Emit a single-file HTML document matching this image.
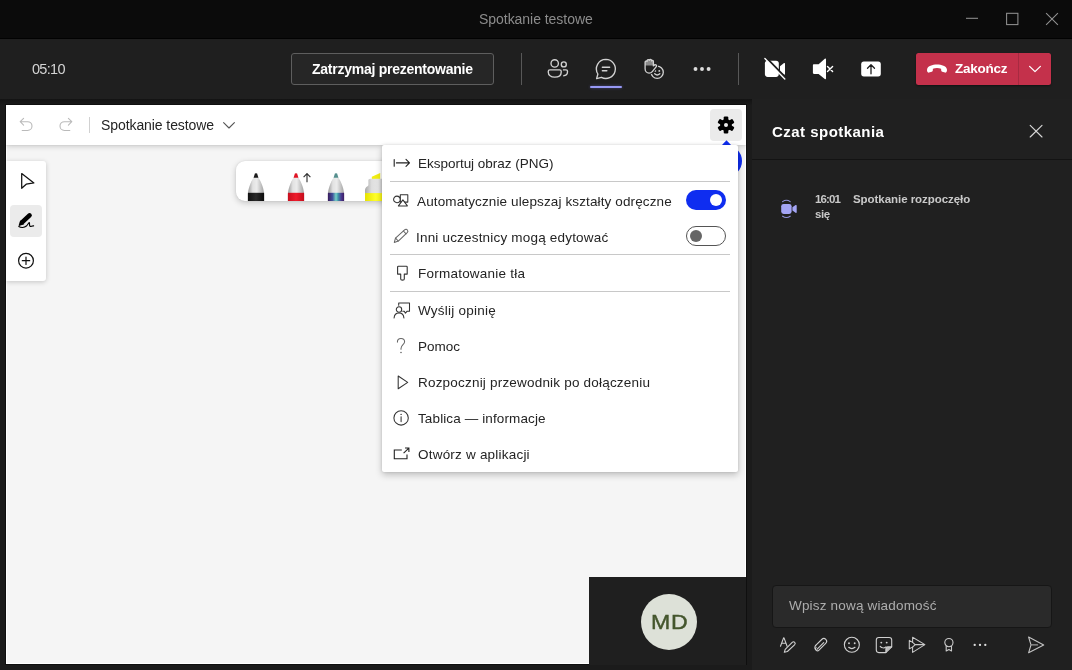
<!DOCTYPE html>
<html><head><meta charset="utf-8">
<style>
*{box-sizing:border-box;margin:0;padding:0}
html,body{width:1072px;height:670px;overflow:hidden;background:#1b1b1b;font-family:"Liberation Sans",sans-serif;}
.abs{position:absolute}
svg{position:absolute;overflow:visible}
.t{position:absolute;white-space:nowrap;line-height:1;will-change:transform}
#titlebar{left:0;top:0;width:1072px;height:39px;background:#0b0b0b}
#toolbar{left:0;top:39px;width:1072px;height:60px;background:#1f1f1f}
#stopbtn{left:291px;top:53px;width:203px;height:32px;border:1px solid #5e5e5e;border-radius:3px;background:#262626}
.vsep{width:1px;background:#585858;top:53px;height:32px}
#endbtn{left:916px;top:53px;width:135px;height:32px;border-radius:2.500px;background:#c4314b;box-shadow:0 1px 2px rgba(0,0,0,.4)}
#enddiv{left:1018px;top:53px;width:1px;height:32px;background:#a72a41}
#stage{left:0;top:99px;width:752px;height:571px;background:#1b1b1b}
#wb{left:6px;top:105px;width:740px;height:559px;background:#f5f5f5;overflow:hidden;outline:1px solid #0f0f0f}
#panel{left:752px;top:99px;width:320px;height:571px;background:#202020}
</style></head><body>
<!-- TITLE BAR -->
<div id="titlebar" class="abs"></div><div class="abs" style="left:0;top:38px;width:1072px;height:1px;background:#020202"></div>
<div class="t" style="left:479px;top:12px;font-size:14px;color:#8c8c8c;letter-spacing:-0.040px">Spotkanie testowe</div>
<svg style="left:960px;top:8px" width="104" height="24" viewBox="0 0 104 24" fill="none" stroke="#919191" stroke-width="1.050">
  <path d="M6 10.300H18"/>
  <rect x="46.600" y="5.300" width="11.300" height="11.300"/>
  <path d="M86.100 5.100L97.900 16.900M97.900 5.100L86.100 16.900"/>
</svg>
<!-- TOOLBAR -->
<div id="toolbar" class="abs"></div>
<div class="t" style="left:31.500px;top:61.900px;font-size:14.500px;color:#d4d4d4;letter-spacing:-0.700px">05:10</div>
<div id="stopbtn" class="abs"></div>
<div class="t" style="left:312px;top:62px;font-size:14px;font-weight:bold;color:#fff;letter-spacing:-0.25px">Zatrzymaj prezentowanie</div>
<div class="abs vsep" style="left:521px"></div>
<div class="abs vsep" style="left:738px"></div>

<!-- people -->
<svg style="left:546px;top:57px" width="24" height="24" viewBox="0 0 24 24" fill="none" stroke="#d2d2d2" stroke-width="1.35">
  <circle cx="8.7" cy="6.4" r="3.7"/>
  <circle cx="17.8" cy="7.4" r="2.5"/>
  <path d="M3.9 12.8H13.6C14.7 12.8 15.2 13.4 15.2 14.3V15.2C15.2 18.1 12.6 20.1 8.7 20.1C4.8 20.1 2.3 18.1 2.3 15.2V14.3C2.3 13.4 2.9 12.8 3.9 12.8Z"/>
  <path d="M16.9 12.8H20C20.9 12.8 21.5 13.4 21.5 14.3V14.8C21.5 17.2 19.8 18.7 17.2 18.9"/>
</svg>
<!-- chat -->
<svg style="left:594px;top:57px" width="24" height="24" viewBox="0 0 24 24" fill="none" stroke="#d2d2d2" stroke-width="1.35" stroke-linejoin="round" stroke-linecap="round">
  <path d="M11.9 2.4A9.5 9.5 0 1 1 7.4 20.3L2.6 21.6L3.9 17A9.5 9.5 0 0 1 11.9 2.4Z"/>
  <path d="M8.4 10.2H15.6M8.4 13.8H12.8" stroke-width="1.5"/>
</svg>
<div class="abs" style="left:590px;top:85.6px;width:32px;height:2.6px;border-radius:1.3px;background:#9799f5;box-shadow:0 0 3px rgba(130,130,255,.45)"></div>
<!-- reactions -->
<svg style="left:642px;top:57px" width="24" height="24" viewBox="0 0 24 24" fill="none" stroke="#d2d2d2" stroke-width="1.3" stroke-linejoin="round" stroke-linecap="round">
  <circle cx="15.2" cy="15.3" r="6.1"/>
  <path d="M12.7 16.8Q15.2 19 17.800 16.800" stroke-width="1.4"/>
  <circle cx="13.300" cy="13.900" r=".95" fill="#d2d2d2" stroke="none"/><circle cx="17.300" cy="13.900" r=".95" fill="#d2d2d2" stroke="none"/>
  <path id="hand" d="M3.100 5.200C3.100 4 4.600 3.700 5.100 4.500V3.600C5.300 2.400 6.900 2.300 7.300 3.300C7.600 2 9.400 2.100 9.600 3.300V3.900C10 3 11.400 3.300 11.400 4.500V8.900C12.200 8 13.400 7.500 14.200 8.100C14.800 8.600 14.600 9.300 14.100 9.900L10.300 14.600C9.400 15.700 8.300 16.100 7.100 16.100C4.800 16.100 3.100 14.200 3.100 11.700Z" fill="#1f1f1f" stroke="#1f1f1f" stroke-width="3.200"/>
  <path d="M3.600 4.300C4.100 3.500 5 3.700 5.100 4.300V3.400C5.500 2.300 6.900 2.300 7.300 3.300C7.700 2.100 9.300 2.200 9.600 3.300V3.900C10.100 3.100 11.300 3.400 11.400 4.500V8.600H3.100V5.200Z" fill="#8a8a8a" stroke="none"/>
  <path d="M3.100 5.200C3.100 4 4.600 3.700 5.100 4.500V3.600C5.300 2.400 6.900 2.300 7.300 3.300C7.600 2 9.400 2.100 9.600 3.300V3.900C10 3 11.400 3.300 11.400 4.500V8.900C12.200 8 13.400 7.500 14.200 8.100C14.800 8.600 14.600 9.300 14.100 9.900L10.300 14.600C9.400 15.700 8.300 16.100 7.100 16.100C4.800 16.100 3.100 14.200 3.100 11.700Z"/>
</svg>
<!-- dots -->
<svg style="left:690px;top:57px" width="24" height="24" viewBox="0 0 24 24" fill="#dcdcdc"><circle cx="5.5" cy="12.05" r="1.95"/><circle cx="12" cy="12.05" r="1.95"/><circle cx="18.6" cy="12.05" r="1.95"/></svg>
<!-- camera off -->
<svg style="left:763px;top:57px" width="24" height="24" viewBox="0 0 24 24">
  <rect x="1.9" y="3.7" width="13.9" height="16.2" rx="2.8" fill="#fff"/>
  <path d="M17 9.2L21 6.1C21.5 5.7 22 6 22 6.6V17C22 17.6 21.5 17.9 21 17.5L17 14.6Z" fill="#fff"/>
  <path d="M2.900 0.600L23.100 21.300" stroke="#1f1f1f" stroke-width="2.200"/>
  <path d="M1.9 1.6L21.8 22" stroke="#fff" stroke-width="1.4" stroke-linecap="round"/>
</svg>
<!-- speaker muted -->
<svg style="left:811px;top:57px" width="24" height="24" viewBox="0 0 24 24" fill="#fff">
  <path d="M3 7.3H7.6L13.8 1.7C14.3 1.2 15 1.5 15 2.2V21.4C15 22.1 14.3 22.4 13.8 21.9L7.6 16.9H3C2.3 16.9 1.9 16.4 1.9 15.8V8.4C1.9 7.8 2.3 7.3 3 7.3Z"/>
  <path d="M16.5 9.4L21.6 14.6M21.6 9.4L16.5 14.6" stroke="#fff" stroke-width="1.4" stroke-linecap="round"/>
</svg>
<!-- share -->
<svg style="left:859px;top:57px" width="24" height="24" viewBox="0 0 24 24">
  <rect x="2.2" y="4.6" width="19.6" height="14.8" rx="2.6" fill="#fff"/>
  <path d="M12 16.800V8M8.500 11.300L12 7.800L15.500 11.300" stroke="#1f1f1f" stroke-width="1.300" fill="none" stroke-linecap="round" stroke-linejoin="round"/>
</svg>

<div id="endbtn" class="abs"></div><div id="enddiv" class="abs"></div>

<svg style="left:925px;top:59px" width="24" height="20" viewBox="0 0 24 20" fill="#fff">
  <path d="M12 5.6C16.6 5.6 21.2 7.1 21.9 10.3C22.1 11.3 22 12.300 21.4 13.1C21.100 13.6 20.6 13.800 20 13.600L17.200 12.700C16.600 12.500 16.200 12 16.200 11.400L16.100 9.700C14.900 9.200 13.400 9 12 9C10.600 9 9.100 9.200 7.900 9.700L7.800 11.400C7.800 12 7.400 12.500 6.800 12.700L4 13.600C3.400 13.800 2.900 13.600 2.600 13.100C2 12.300 1.900 11.300 2.100 10.300C2.800 7.100 7.400 5.600 12 5.600Z"/>
</svg>
<svg style="left:1027px;top:61px" width="16" height="16" viewBox="0 0 16 16" fill="none" stroke="#fff" stroke-width="1.3" stroke-linecap="round" stroke-linejoin="round"><path d="M2.600 5.400L8 10.600L13.400 5.400"/></svg>
<div class="t" style="left:954.5px;top:62px;font-size:13.5px;font-weight:bold;color:#fff;letter-spacing:-0.25px">Zakończ</div>
<!-- STAGE -->
<div id="stage" class="abs"></div><div class="abs" style="left:0;top:99px;width:752px;height:6px;background:linear-gradient(#131313,#1a1a1a)"></div>
<div id="wb" class="abs">
<div class="abs" style="left:0;top:0;width:740px;height:559px;border:1px solid #fff"></div>

<!-- pen toolbar (coords relative to wb: subtract 6,105) -->
<div class="abs" style="left:230px;top:55.800px;width:280px;height:40.200px;background:#fff;border-radius:9px;box-shadow:0 2px 6px rgba(0,0,0,.2),0 0 2px rgba(0,0,0,.1);overflow:hidden">
<svg style="left:0;top:-0.400px" width="280" height="41" viewBox="0 0 280 41">
  <defs>
    <linearGradient id="gb" x1="0" x2="1" y1="0" y2="0"><stop offset="0" stop-color="#9a9a9a"/><stop offset=".3" stop-color="#e2e2e2"/><stop offset=".55" stop-color="#ececec"/><stop offset="1" stop-color="#a2a2a2"/></linearGradient>
    <linearGradient id="gal" x1="0" x2="1" y1="0" y2="0"><stop offset="0" stop-color="#3a1b5c"/><stop offset=".28" stop-color="#3f4f9a"/><stop offset=".5" stop-color="#74d2c6"/><stop offset=".64" stop-color="#3d8fa8"/><stop offset=".82" stop-color="#4a3a90"/><stop offset="1" stop-color="#3c1d62"/></linearGradient>
    <linearGradient id="blk" x1="0" x2="1" y1="0" y2="0"><stop offset="0" stop-color="#111"/><stop offset=".5" stop-color="#2a2a2a"/><stop offset="1" stop-color="#0c0c0c"/></linearGradient>
    <linearGradient id="red" x1="0" x2="1" y1="0" y2="0"><stop offset="0" stop-color="#c80f1e"/><stop offset=".5" stop-color="#ee1c2c"/><stop offset="1" stop-color="#c40d1c"/></linearGradient>
  <linearGradient id="yel" x1="0" x2="1" y1="0" y2="0"><stop offset="0" stop-color="#e6e200"/><stop offset=".45" stop-color="#ffff2a"/><stop offset="1" stop-color="#efeb00"/></linearGradient>
    <linearGradient id="gb2" x1="0" x2="1" y1="0" y2="0"><stop offset="0" stop-color="#a8a8a8"/><stop offset=".35" stop-color="#dedede"/><stop offset=".7" stop-color="#e6e6e6"/><stop offset="1" stop-color="#c4c4c4"/></linearGradient>
  </defs>
  <!-- black pen, center x=20 -->
  <g transform="translate(20,0)">
    <path d="M-8.100 41V34.500C-8 29.300 -5.500 22 -2.200 17.500H2.200C5.500 22 8 29.300 8.100 34.500V41Z" fill="url(#gb)"/>
    <path d="M-2.400 17.700L-1.100 13.600Q0 12.700 1.100 13.600L2.400 17.700Z" fill="#1b1b1b"/>
    <rect x="-8.100" y="32.800" width="16.200" height="9" fill="url(#blk)"/>
  </g>
  <!-- red pen, center x=60 -->
  <g transform="translate(60,0)">
    <path d="M-8.100 41V34.500C-8 29.300 -5.500 22 -2.200 17.500H2.200C5.500 22 8 29.300 8.100 34.500V41Z" fill="url(#gb)"/>
    <path d="M-2.400 17.700L-1.100 13.600Q0 12.700 1.100 13.600L2.400 17.700Z" fill="#e01525"/>
    <rect x="-8.100" y="32.800" width="16.200" height="9" fill="url(#red)"/>
    <path d="M11 22.200V14M7.600 17.200L11 13.700L14.400 17.200" fill="none" stroke="#333" stroke-width="1.150"/>
  </g>
  <!-- galaxy pen, center x=100 -->
  <g transform="translate(100,0)">
    <path d="M-8.100 41V34.500C-8 29.300 -5.500 22 -2.200 17.500H2.200C5.500 22 8 29.300 8.100 34.500V41Z" fill="url(#gb)"/>
    <path d="M-2.400 17.700L-1.100 13.600Q0 12.700 1.100 13.600L2.400 17.700Z" fill="#558f8e"/>
    <rect x="-8.100" y="32.800" width="16.200" height="9" fill="url(#gal)"/>
  </g>
  <!-- highlighter, center x=140 -->
  <g transform="translate(140,0)">
    <path d="M-4.200 19V16.800L4.200 12.900V19Z" fill="#f2ee12"/>
    <path d="M-11 41V30.500C-11 28.500 -10 27.300 -8.800 26.600C-8 26.100 -7.600 25.600 -7.600 24.600V20.600C-7.600 19.400 -6.900 18.700 -5.800 18.700H8V41Z" fill="url(#gb2)"/>
    <rect x="-11" y="33.100" width="24" height="9" fill="url(#yel)"/>
  </g>
</svg>
</div>
<!-- header -->
<div class="abs" style="left:0;top:0;width:740px;height:40px;background:#fff;box-shadow:0 1px 6px rgba(0,0,0,.2),0 0 1px rgba(0,0,0,.15)"></div>
<svg style="left:12px;top:11px" width="16" height="16" viewBox="0 0 16 16" fill="none" stroke="#bababa" stroke-width="1.100" stroke-linecap="round" stroke-linejoin="round">
  <path d="M5.600 2.300L2.200 5.700L5.600 9.100M2.400 5.700H9.600A4.400 4.400 0 0 1 9.600 14.500H4.200"/>
</svg>
<svg style="left:52px;top:11px" width="16" height="16" viewBox="0 0 16 16" fill="none" stroke="#bababa" stroke-width="1.100" stroke-linecap="round" stroke-linejoin="round">
  <path d="M10.400 2.300L13.800 5.700L10.400 9.100M13.600 5.700H6.400A4.400 4.400 0 0 0 6.400 14.500H11.800"/>
</svg>
<div class="abs" style="left:83px;top:12px;width:1px;height:16px;background:#d1d1d1"></div>
<div class="t" style="left:95px;top:13px;font-size:14px;color:#242424;letter-spacing:-0.080px">Spotkanie testowe</div>
<svg style="left:216px;top:14px" width="14" height="12" viewBox="0 0 14 12" fill="none" stroke="#555" stroke-width="1.100" stroke-linecap="round" stroke-linejoin="round"><path d="M1.600 3.700L7 9L12.400 3.700"/></svg>
<!-- settings button -->
<div class="abs" style="left:704px;top:4px;width:32px;height:32px;border-radius:4px;background:#ebebeb"></div>
<svg style="left:711px;top:10.500px" width="18" height="18" viewBox="-9 -9 18 18">
  <g fill="#000">
    <circle r="5.900"/>
    <g id="teeth"><rect x="-2.300" y="-8.600" width="4.600" height="17.200" rx="1.100"/><rect x="-2.300" y="-8.600" width="4.600" height="17.200" rx="1.100" transform="rotate(60)"/><rect x="-2.300" y="-8.600" width="4.600" height="17.200" rx="1.100" transform="rotate(120)"/></g>
  </g>
  <circle r="2" fill="#ebebeb"/>
</svg>
<!-- blue circle under menu -->
<div class="abs" style="left:703.700px;top:40px;width:32px;height:32px;border-radius:50%;background:#0f2df0"></div>
<!-- blue pointer -->
<svg style="left:714.500px;top:34.500px" width="11" height="6" viewBox="0 0 11 6"><path d="M0 6L5.500 0.300L11 6Z" fill="#0f2df0"/></svg>
<!-- left palette -->
<div class="abs" style="left:0;top:56px;width:40px;height:120px;background:#fff;border-radius:0 3px 3px 0;box-shadow:0 1px 5px rgba(0,0,0,.2)"></div>
<div class="abs" style="left:4px;top:100px;width:32px;height:32px;border-radius:4px;background:#ebebeb"></div>
<svg style="left:12px;top:66px" width="20" height="20" viewBox="0 0 20 20" fill="#fff" stroke="#111" stroke-width="1.250" stroke-linejoin="round"><path d="M3.700 2.600V17.300L8.200 13.200L15.900 11.900Z"/></svg>
<svg style="left:10px;top:106px" width="20" height="20" viewBox="0 0 20 20">
  <path d="M13.500 4.400L6.300 11.100" stroke="#000" stroke-width="4.700" stroke-linecap="round" fill="none"/>
  <path d="M4.200 9.300L8.300 13.300L3 14.900L2.600 14.500Z" fill="#000"/>
  <path d="M2.800 15.500C5 16.800 8.500 16.600 10.400 15C11.700 13.900 12.500 11.700 13.200 11.600C13.900 11.600 13 14.600 14 15.300C15 15.900 16 14.500 17.600 14.900" fill="none" stroke="#000" stroke-width="1.150" stroke-linecap="round"/>
</svg>
<svg style="left:10px;top:146px" width="20" height="20" viewBox="0 0 20 20" fill="none" stroke="#111" stroke-width="1.200" stroke-linecap="round"><circle cx="10" cy="9.700" r="7.400"/><path d="M6.300 9.700H13.700M10 6V13.400"/></svg>

</div>

<div class="abs" id="menu" style="left:382px;top:145px;width:356px;height:327px;background:#fff;border-radius:2px;box-shadow:0 3px 7px rgba(0,0,0,.22),0 0 3px rgba(0,0,0,.12)"></div>
<div class="abs" style="left:390px;top:181px;width:340px;height:1px;background:#c8c8c8"></div>
<div class="abs" style="left:390px;top:254px;width:340px;height:1px;background:#c8c8c8"></div>
<div class="abs" style="left:390px;top:291px;width:340px;height:1px;background:#c8c8c8"></div>
<style>.m{font-size:13.5px;color:#242424}</style>
<div class="t m" style="left:418px;top:156.5px;letter-spacing:-0.020px">Eksportuj obraz (PNG)</div>
<div class="t m" style="left:417px;top:195px;letter-spacing:0.125px">Automatycznie ulepszaj kształty odręczne</div>
<div class="t m" style="left:416px;top:230.5px;letter-spacing:0.190px">Inni uczestnicy mogą edytować</div>
<div class="t m" style="left:418px;top:266.500px;letter-spacing:0.230px">Formatowanie tła</div>
<div class="t m" style="left:418px;top:303.500px;letter-spacing:0.240px">Wyślij opinię</div>
<div class="t m" style="left:418px;top:339.500px;letter-spacing:0px">Pomoc</div>
<div class="t m" style="left:418px;top:375.500px;letter-spacing:0.200px">Rozpocznij przewodnik po dołączeniu</div>
<div class="t m" style="left:418px;top:411.500px;letter-spacing:0.120px">Tablica — informacje</div>
<div class="t m" style="left:418px;top:447.500px;letter-spacing:0.210px">Otwórz w aplikacji</div>
<!-- toggles -->
<div class="abs" style="left:686px;top:190px;width:40px;height:20px;border-radius:10px;background:#0f2df0"></div>
<div class="abs" style="left:710px;top:194px;width:12px;height:12px;border-radius:50%;background:#fff"></div>
<div class="abs" style="left:686px;top:226px;width:40px;height:20px;border-radius:10px;background:#fff;border:1px solid #555"></div>
<div class="abs" style="left:690px;top:230px;width:12px;height:12px;border-radius:50%;background:#666"></div>
<!-- menu icons -->
<svg style="left:392px;top:153px" width="20" height="20" viewBox="0 0 20 20" fill="none" stroke="#222" stroke-width="1.100" stroke-linecap="round" stroke-linejoin="round">
  <path d="M2.200 6.600V13.200M4.400 9.900H17.400M14 6.400L17.500 9.900L14 13.400"/>
</svg>
<svg style="left:392px;top:190px" width="20" height="20" viewBox="0 0 20 20" fill="none" stroke="#333" stroke-width="1.050" stroke-linejoin="round">
  <rect x="8.300" y="4.800" width="7.500" height="7.300" fill="#fff"/>
  <circle cx="4.900" cy="9.400" r="3.300" fill="#fff"/>
  <path d="M10.900 9.900L15.400 15.900H6.400Z" fill="#fff"/>
</svg>
<svg style="left:392px;top:226px" width="20" height="20" viewBox="0 0 20 20" fill="none" stroke="#666" stroke-width="1.050" stroke-linejoin="round" stroke-linecap="round">
  <path d="M2.300 16.400L3.500 12.100L12.600 3.900C13.500 3.100 14.700 3.200 15.400 4C16.100 4.800 16 5.900 15.200 6.700L6.300 15.100Z"/>
  <path d="M3.600 12.200L6.200 15M11.400 5L14.100 7.800"/>
</svg>
<svg style="left:392px;top:263px" width="20" height="20" viewBox="0 0 20 20" fill="none" stroke="#333" stroke-width="1.100" stroke-linejoin="round" stroke-linecap="round">
  <path d="M6.400 3.300H14.400Q15.200 3.300 15.200 4.100V11.100H12.300V16C12.300 17.500 8.700 17.500 8.700 16V11.100H5.600V4.100Q5.600 3.300 6.400 3.300Z"/>
</svg>
<svg style="left:392px;top:300px" width="20" height="20" viewBox="0 0 20 20" fill="none" stroke="#333" stroke-width="1.050" stroke-linejoin="round" stroke-linecap="round">
  <circle cx="7" cy="9.500" r="2.700"/>
  <path d="M2.100 18C2.300 14.900 4.300 13 7 13C9.700 13 11.700 14.900 11.900 18"/>
  <path d="M6.700 5.300V3H17.500V11.200H15.200L13.400 13.200L12.300 11.200H10.800"/>
</svg>
<svg style="left:392px;top:336px" width="20" height="20" viewBox="0 0 20 20" fill="none" stroke="#666" stroke-width="1.050" stroke-linecap="round">
  <path d="M5.400 6.100C5.400 3.800 7 2.500 9 2.500C11 2.500 12.600 3.800 12.600 5.800C12.600 8.700 9 8.900 9 12.600V13.200"/>
  <circle cx="9" cy="16.500" r=".8" fill="#666" stroke="none"/>
</svg>
<svg style="left:392px;top:372px" width="20" height="20" viewBox="0 0 20 20" fill="none" stroke="#333" stroke-width="1.050" stroke-linejoin="round">
  <path d="M6.200 4V16.800L15.700 10.400Z"/>
</svg>
<svg style="left:392px;top:408px" width="20" height="20" viewBox="0 0 20 20" fill="none" stroke="#333" stroke-width="1.050" stroke-linecap="round">
  <circle cx="9.100" cy="9.900" r="7.200"/>
  <path d="M9.100 8.700V13.600"/><circle cx="9.100" cy="6.400" r=".7" fill="#333" stroke="none"/>
</svg>
<svg style="left:392px;top:444px" width="20" height="20" viewBox="0 0 20 20" fill="none" stroke="#222" stroke-width="1.100" stroke-linejoin="miter">
  <path d="M9.800 6H2.300V14.700H15V10.600"/>
  <path d="M11.600 9.100L16.600 4.300M13 4H16.900V7.900"/>
</svg>


<div class="abs" style="left:589px;top:577px;width:157px;height:88px;background:#1f1f1f"></div>
<div class="abs" style="left:641px;top:594px;width:56px;height:56px;border-radius:50%;background:#dde1d8"></div>
<div class="t" style="left:650.700px;top:611px;font-size:21px;color:#44562d;letter-spacing:0.650px;-webkit-text-stroke:0.450px #44562d;transform:scaleX(1.1);transform-origin:0 0">MD</div>

<div id="panel" class="abs"></div>

<div class="t" style="left:771.500px;top:124px;font-size:15px;font-weight:bold;color:#fff;letter-spacing:0.470px">Czat spotkania</div>
<svg style="left:1028px;top:123px" width="16" height="16" viewBox="0 0 16 16" fill="none" stroke="#d6d6d6" stroke-width="1.150" stroke-linecap="round"><path d="M2.200 2.300L14 14M14 2.300L2.200 14"/></svg>
<div class="abs" style="left:752px;top:159px;width:320px;height:1px;background:#131313"></div>
<!-- meeting icon -->
<svg style="left:778px;top:198px" width="22" height="22" viewBox="0 0 22 22">
  <rect x="3.200" y="5.900" width="10.400" height="10" rx="2.400" fill="#a4a5f5"/>
  <path d="M14.400 9.300L17.600 7.100C18.100 6.700 18.700 7 18.700 7.600V14.200C18.700 14.800 18.100 15.100 17.600 14.700L14.400 12.500Z" fill="#a4a5f5"/>
  <path d="M4.600 3.600Q8.400 1 12.200 3.600M4.600 18.200Q8.400 20.800 12.200 18.200" fill="none" stroke="#8f90d8" stroke-width="1.100" stroke-linecap="round"/>
</svg>
<div class="t" style="left:815px;top:194px;font-size:11.500px;font-weight:bold;color:#c9c9c9;letter-spacing:-0.900px">16:01</div>
<div class="t" style="left:853px;top:194px;font-size:11.500px;font-weight:bold;color:#c9c9c9;letter-spacing:-0.050px">Spotkanie rozpoczęło</div>
<div class="t" style="left:815px;top:209px;font-size:11.500px;font-weight:bold;color:#c9c9c9;letter-spacing:-0.400px">się</div>
<!-- compose box -->
<div class="abs" style="left:772px;top:585px;width:280px;height:43px;border-radius:4px;background:#2a2a2a;border:1px solid #161616"></div>
<div class="t" style="left:788.500px;top:599px;font-size:13.500px;color:#adadad;letter-spacing:0.180px">Wpisz nową wiadomość</div>

<!-- format -->
<svg style="left:778px;top:635px" width="20" height="20" viewBox="0 0 20 20" fill="none" stroke="#d0d0d0" stroke-width="1.100" stroke-linejoin="round" stroke-linecap="round">
  <path d="M2.500 11.200L5.600 2.900H6L9.100 11.200M3.600 8.300H8"/>
  <path d="M6.300 17.300L7.200 14.300L14.200 7.400C15 6.600 16.100 6.700 16.700 7.300C17.300 7.900 17.300 9 16.500 9.800L9.400 16.500Z"/>
</svg>
<!-- paperclip -->
<svg style="left:810px;top:635px" width="20" height="20" viewBox="0 0 20 20" fill="none" stroke="#d0d0d0" stroke-width="1.100" stroke-linejoin="round" stroke-linecap="round">
  <path d="M7.200 14.200L13.700 7.600M5.700 10.400L11.700 4.500C12.900 3.300 14.700 3.300 15.800 4.400C16.900 5.500 16.900 7.200 15.700 8.400L9 15.200C8.200 16 6.900 16 6.100 15.200C5.300 14.400 5.300 13.200 6.100 12.400"/>
  <path d="M5.700 10.400C4.700 11.400 4.500 13.400 5.700 14.600"/>
</svg>
<!-- emoji -->
<svg style="left:842px;top:635px" width="20" height="20" viewBox="0 0 20 20" fill="none" stroke="#d0d0d0" stroke-width="1.100" stroke-linecap="round">
  <circle cx="9.850" cy="9.800" r="7.500"/>
  <path d="M6.700 12.300Q9.850 14.900 13 12.300" stroke-width="1.200"/>
  <circle cx="7" cy="8.300" r=".95" fill="#d0d0d0" stroke="none"/><circle cx="12.700" cy="8.300" r=".95" fill="#d0d0d0" stroke="none"/>
</svg>
<!-- sticker -->
<svg style="left:874px;top:635px" width="20" height="20" viewBox="0 0 20 20" fill="none" stroke="#d0d0d0" stroke-width="1.100" stroke-linecap="round" stroke-linejoin="round">
  <path d="M4.800 2.500H15.200C16.700 2.500 17.700 3.500 17.700 5V11.800L11.800 17.600H4.800C3.300 17.600 2.300 16.600 2.300 15.100V5C2.300 3.500 3.300 2.500 4.800 2.500Z"/>
  <path d="M17.600 11.900H13.800C12.600 11.900 11.900 12.600 11.900 13.800V17.500" fill="#bdbdbd"/>
  <path d="M6.200 11.400C7.600 13.100 10.200 13.300 11.800 12"/>
  <circle cx="7.300" cy="7.600" r=".95" fill="#d0d0d0" stroke="none"/><circle cx="12.700" cy="7.600" r=".95" fill="#d0d0d0" stroke="none"/>
</svg>
<!-- double send -->
<svg style="left:906px;top:635px" width="20" height="20" viewBox="0 0 20 20" fill="none" stroke="#c9c9c9" stroke-width="1.050" stroke-linejoin="round" stroke-linecap="round">
  <path d="M6.600 2.300L18.900 9.600L6.600 17.400V12.100L9.200 9.600L6.600 7.400Z"/>
  <path d="M9.200 9.600H18"/>
  <path d="M6.600 7.400L3.300 5.400V13.800L6.600 12.100"/>
</svg>
<!-- award -->
<svg style="left:939px;top:635px" width="20" height="20" viewBox="0 0 20 20" fill="none" stroke="#c9c9c9" stroke-width="1.100" stroke-linejoin="round">
  <circle cx="9.900" cy="7.600" r="4.100"/>
  <path d="M7.200 10.900V16L9.900 14.500L12.500 16V10.900"/>
</svg>
<!-- dots -->
<svg style="left:970px;top:635px" width="20" height="20" viewBox="0 0 20 20" fill="#e0e0e0"><circle cx="4.700" cy="9.900" r="1.150"/><circle cx="10" cy="9.900" r="1.150"/><circle cx="15.300" cy="9.900" r="1.150"/></svg>
<!-- send -->
<svg style="left:1026px;top:635px" width="20" height="20" viewBox="0 0 20 20" fill="none" stroke="#c4c4c4" stroke-width="1.100" stroke-linejoin="round" stroke-linecap="round">
  <path d="M2.600 2.100L17.700 9.900L2.600 17.800L5 9.900Z"/>
  <path d="M5.200 9.900H11.500" stroke="#9a9a9a" stroke-width="1.400"/>
</svg>


</body></html>
